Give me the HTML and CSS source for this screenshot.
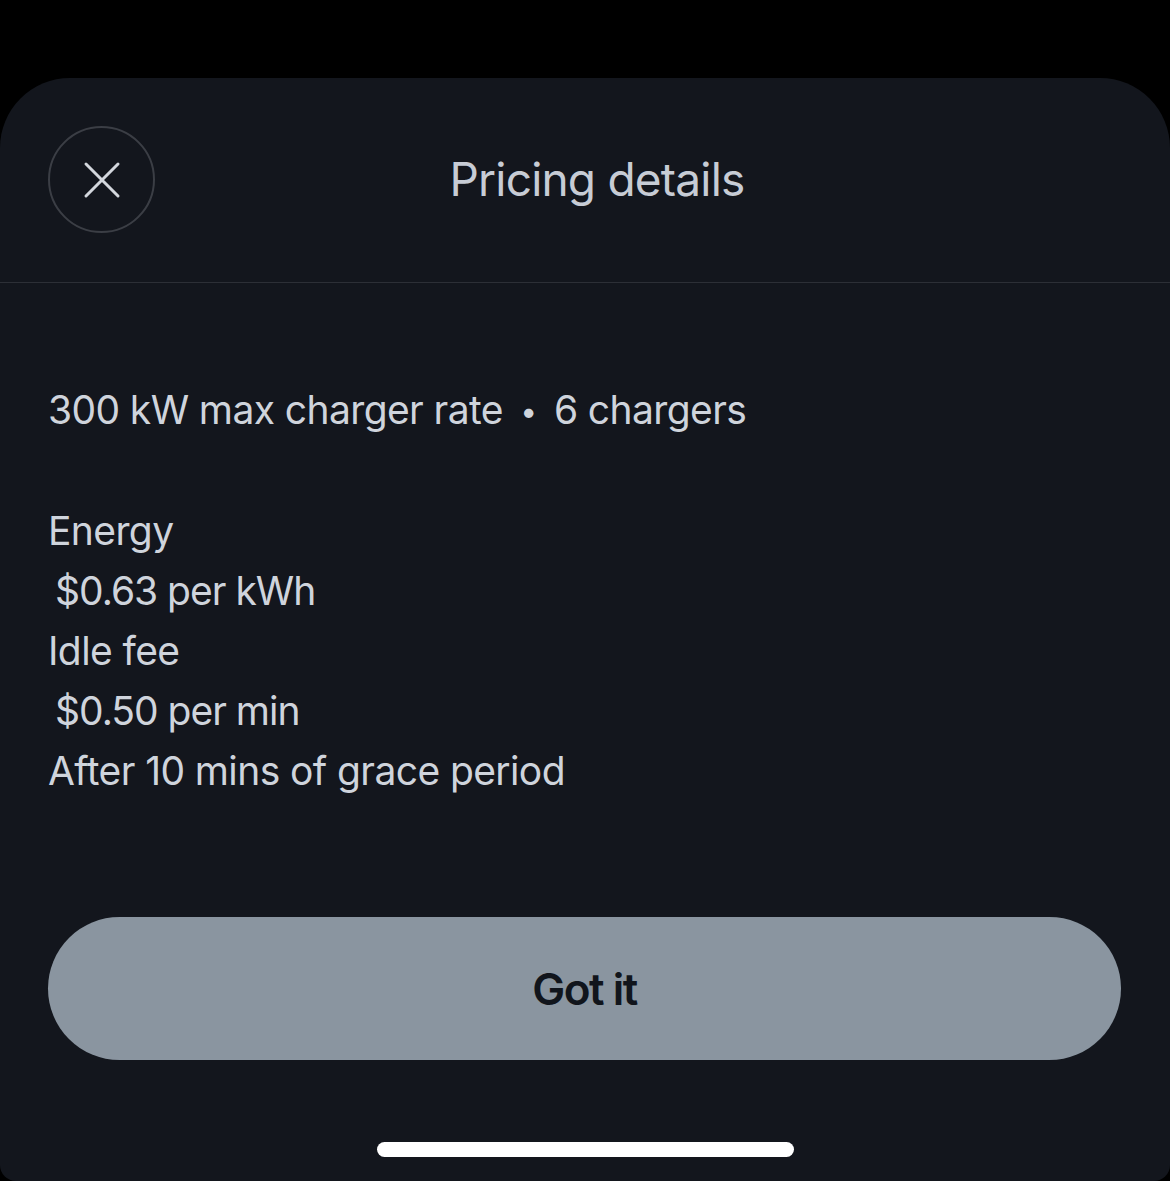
FILE: index.html
```html
<!DOCTYPE html>
<html>
<head>
	<title>Pricing details</title>
	<link rel="stylesheet" href="styles.css">
</head>
<body>

<div class="sheet">
	<div class="sheet-head">
		<button class="close-btn" aria-label="Close">
			<svg width="38" height="38" viewBox="0 0 38 38">
				<path d="M3 3 L35 35 M35 3 L3 35" stroke="#d3d7dd" stroke-width="3" stroke-linecap="round" fill="none"/>
			</svg>
		</button>
		<h1 class="sheet-title">Pricing details</h1>
	</div>

	<div class="details">
		<p class="summary">300 kW max charger rate <span class="dot">•</span> 6 chargers</p>
		<p>Energy</p>
		<p class="price">$0.63 per kWh</p>
		<p>Idle fee</p>
		<p class="price">$0.50 per min</p>
		<p>After 10 mins of grace period</p>
	</div>

	<button class="got-it">Got it</button>

	<div class="home-bar"></div>
</div>

</body>
</html>
```

FILE: styles.css
```css
body { margin: 0; padding: 0; background: #000; font-family: Inter, "Open Sans", sans-serif; }

.sheet { margin-top: 78px; height: 1103px; background: #13161d; border-radius: 70px 70px 16px 16px;
	display: flex; flex-direction: column; box-sizing: border-box; }

.sheet-head { height: 205px; box-sizing: border-box; padding: 48px 131px 0 48px; display: flex; align-items: flex-start;
	border-bottom: 1px solid #2c2f36; }
.close-btn { width: 107px; height: 107px; border-radius: 50%; border: 2px solid #3b3e45; background: transparent;
	display: flex; align-items: center; justify-content: center; padding: 0; flex-shrink: 0; }
.sheet-title { flex: 1; margin: 0; text-align: center; font-size: 46px; font-weight: 400; line-height: 107px;
	color: #c7ccd5; letter-spacing: -0.8px; }

.details { padding: 97px 48px 0; color: #cfd4dc; font-size: 39px; letter-spacing: -0.6px; }
.details p { margin: 0; line-height: 60px; }
.details .summary { margin-bottom: 60px; }
.details .price { padding-left: 7px; letter-spacing: -1px; }
.dot { font-size: 30px; padding: 0 7px; vertical-align: 2px; }

.got-it { margin: 116px 49px 0 48px; height: 143px; border: none; border-radius: 72px; background: #8a95a0;
	color: #11151c; font-family: Inter, sans-serif; font-size: 44px; font-weight: 600; letter-spacing: -1.5px; }

.home-bar { width: 417px; height: 15px; border-radius: 8px; background: #fff; margin: 82px auto 0; }
```
